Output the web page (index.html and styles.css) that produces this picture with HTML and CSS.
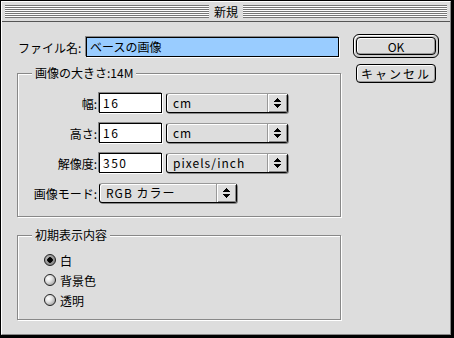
FILE: index.html
```html
<!DOCTYPE html>
<html lang="ja">
<head>
    <meta charset="UTF-8">
    <meta name="viewport" content="width=device-width, initial-scale=1.0">
    <title>新規</title>
    <link rel="stylesheet" href="styles.css">
</head>
<body>
    <div class="window">
        <div class="titlebar">
            <div class="stripes"></div>
            <span class="title">新規</span>
            <div class="stripes"></div>
        </div>
        <div class="content">
            <div class="main">
                <div class="name-row">
                    <span class="name-label">ファイル名:</span>
                    <div class="field name-field">ベースの画像</div>
                </div>

                <fieldset class="group size-group">
                    <legend>画像の大きさ:14M</legend>
                    <div class="size-grid">
                        <span class="label">幅:</span>
                        <div class="field num">16</div>
                        <div class="popup unit">
                            <span class="popup-text">cm</span>
                            <span class="popup-arrows"><svg width="7" height="10" viewBox="0 0 7 10" shape-rendering="crispEdges"><path d="M3 0h1v1h1v1h1v1h1v1H0V3h1V2h1V1h1z M0 6h7v1H6v1H5v1H4v1H3V9H2V8H1V7H0z" fill="#000"/></svg></span>
                        </div>

                        <span class="label">高さ:</span>
                        <div class="field num">16</div>
                        <div class="popup unit">
                            <span class="popup-text">cm</span>
                            <span class="popup-arrows"><svg width="7" height="10" viewBox="0 0 7 10" shape-rendering="crispEdges"><path d="M3 0h1v1h1v1h1v1h1v1H0V3h1V2h1V1h1z M0 6h7v1H6v1H5v1H4v1H3V9H2V8H1V7H0z" fill="#000"/></svg></span>
                        </div>

                        <span class="label">解像度:</span>
                        <div class="field num">350</div>
                        <div class="popup unit">
                            <span class="popup-text">pixels/inch</span>
                            <span class="popup-arrows"><svg width="7" height="10" viewBox="0 0 7 10" shape-rendering="crispEdges"><path d="M3 0h1v1h1v1h1v1h1v1H0V3h1V2h1V1h1z M0 6h7v1H6v1H5v1H4v1H3V9H2V8H1V7H0z" fill="#000"/></svg></span>
                        </div>

                        <span class="label">画像モード:</span>
                        <div class="popup mode">
                            <span class="popup-text">RGB カラー</span>
                            <span class="popup-arrows"><svg width="7" height="10" viewBox="0 0 7 10" shape-rendering="crispEdges"><path d="M3 0h1v1h1v1h1v1h1v1H0V3h1V2h1V1h1z M0 6h7v1H6v1H5v1H4v1H3V9H2V8H1V7H0z" fill="#000"/></svg></span>
                        </div>
                    </div>
                </fieldset>

                <fieldset class="group contents-group">
                    <legend>初期表示内容</legend>
                    <div class="radio-list">
                        <div class="radio-row"><span class="radio checked"></span>白</div>
                        <div class="radio-row"><span class="radio"></span>背景色</div>
                        <div class="radio-row"><span class="radio"></span>透明</div>
                    </div>
                </fieldset>
            </div>

            <div class="buttons">
                <div class="default-ring">
                    <button class="btn ok">OK</button>
                </div>
                <button class="btn cancel">キャンセル</button>
            </div>
        </div>
    </div>
</body>
</html>
```

FILE: styles.css
```css
html, body {
    margin: 0;
    background-color: #000;
}
body {
    width: 454px;
    height: 338px;
    overflow: hidden;
    font-family: "Noto Sans CJK JP", "Liberation Sans", sans-serif;
    font-size: 12px;
    color: #000;
}
.window {
    box-sizing: border-box;
    width: 450px;
    height: 334px;
    margin: 1px 0 0 1px;
    background-color: #ddd;
    border: 1px solid;
    border-color: #fff #888 #888 #fff;
}

/* title bar */
.titlebar {
    display: flex;
    align-items: center;
    height: 19px;
    padding: 0 3px;
    border-bottom: 1px solid #555;
}
.stripes {
    flex: 1;
    height: 13px;
    background: repeating-linear-gradient(#777 0 1px, #fff 1px 2px);
}
.title {
    padding: 0 5px;
    line-height: 14px;
}

.content {
    display: flex;
    padding: 15px 0 0 15px;
}
.main {
    width: 324px;
}

/* file name row */
.name-row {
    display: flex;
    align-items: center;
    height: 20px;
}
.name-label {
    width: 68px;
    padding-left: 1px;
}
.field {
    box-sizing: border-box;
    height: 20px;
    line-height: 18px;
    padding-left: 3px;
    background-color: #fff;
    border: 1px solid #000;
    box-shadow: -1px -1px 0 #888, 1px 1px 0 #fff;
}
.name-field {
    width: 253px;
    background-color: #99ccff;
}

/* group boxes */
.group {
    margin: 9px 0 0 0;
    padding: 0;
    min-inline-size: 0;
    border: 1px solid #888;
    box-shadow: inset 1px 1px 0 #fff, 1px 1px 0 #fff;
}
.group legend {
    margin-left: 14px;
    padding: 0 3px;
    line-height: 14px;
    background-color: #ddd;
}
.contents-group {
    margin-top: 11px;
}

.size-grid {
    display: grid;
    grid-template-columns: 80px 65px 126px;
    grid-auto-rows: 22px;
    row-gap: 8px;
    align-items: center;
    padding: 12px 0 12px 0;
}
.label {
    text-align: right;
    padding-right: 1px;
}
.num {
    width: 63px;
    margin-left: 1px;
    letter-spacing: 1.5px;
}

/* popup menus */
.popup {
    box-sizing: border-box;
    display: flex;
    height: 20px;
    background-color: #ddd;
    border: 1px solid #000;
    border-top-color: #999;
    border-radius: 3px;
    box-shadow: inset 1px 1px 0 #fff, 1px 1px 0 #888;
}
.unit {
    width: 122px;
    margin-left: 3px;
}
.mode {
    grid-column: 2 / 4;
    width: 138px;
    margin-left: 1px;
}
.popup-text {
    flex: 1;
    padding-left: 6px;
    line-height: 18px;
    letter-spacing: 1px;
}
.popup-arrows {
    width: 19px;
    display: flex;
    align-items: center;
    justify-content: center;
    border-left: 1px solid #999;
    box-shadow: inset 1px 1px 0 #fff, inset -1px -1px 0 #888;
}

/* radio buttons */
.radio-list {
    padding: 8px 0 9px 26px;
}
.radio-row {
    display: flex;
    align-items: center;
    gap: 4px;
    height: 20px;
}
.radio {
    box-sizing: border-box;
    width: 12px;
    height: 12px;
    border-radius: 50%;
    border: 1px solid #222;
    background: radial-gradient(circle at 35% 35%, #fff 0, #e4e4e4 35%, #888 100%);
}
.radio.checked {
    background:
        radial-gradient(circle, #000 0 2.5px, transparent 3px),
        radial-gradient(circle at 35% 35%, #bbb 0, #777 100%);
}

/* buttons */
.buttons {
    display: flex;
    flex-direction: column;
    align-items: center;
    gap: 6px;
    width: 86px;
    margin-left: 12px;
    margin-top: -3px;
}
.default-ring {
    box-sizing: border-box;
    width: 86px;
    height: 24px;
    padding: 2px;
    border: 1px solid #000;
    border-radius: 6px;
    background-color: #ccc;
    box-shadow: inset 1px 1px 0 #fff;
}
.btn {
    box-sizing: border-box;
    width: 80px;
    height: 19px;
    padding: 0;
    font: inherit;
    line-height: 17px;
    color: #000;
    background-color: #ddd;
    border: 1px solid #000;
    border-radius: 4px;
    box-shadow: inset 1px 1px 0 #fff, inset -1px -1px 0 #999;
}
.ok {
    display: block;
    height: 18px;
}
.cancel {
    letter-spacing: 2px;
}
```
